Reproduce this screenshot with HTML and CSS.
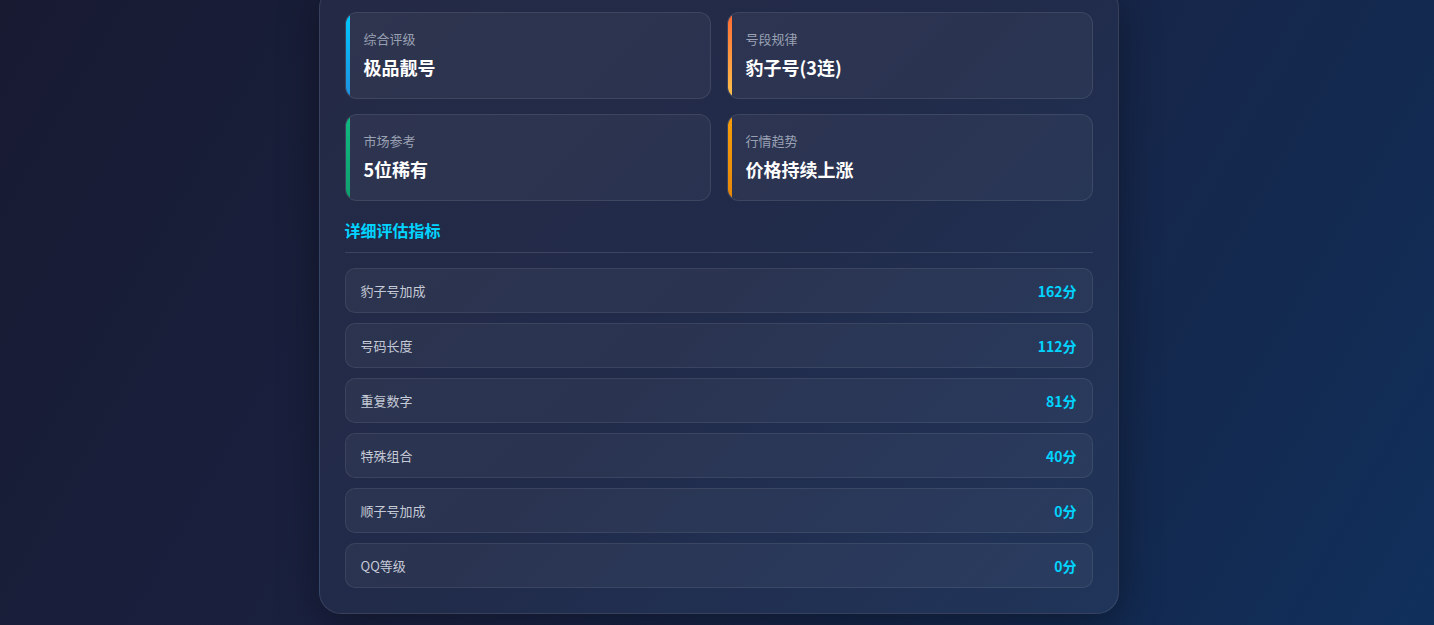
FILE: index.html
```html
<!DOCTYPE html>
<html lang="zh-CN">
<head>
<meta charset="utf-8">
<title>号码评估</title>
<link rel="stylesheet" href="styles.css">
</head>
<body>
<div class="page">
  <div class="panel">
    <div class="info-grid">
      <div class="info-card accent-blue">
        <div class="info-label">综合评级</div>
        <div class="info-value">极品靓号</div>
      </div>
      <div class="info-card accent-orange">
        <div class="info-label">号段规律</div>
        <div class="info-value">豹子号(3连)</div>
      </div>
      <div class="info-card accent-green">
        <div class="info-label">市场参考</div>
        <div class="info-value">5位稀有</div>
      </div>
      <div class="info-card accent-amber">
        <div class="info-label">行情趋势</div>
        <div class="info-value">价格持续上涨</div>
      </div>
    </div>
    <h3 class="section-title">详细评估指标</h3>
    <div class="metric-list">
      <div class="metric-row"><span class="metric-name">豹子号加成</span><span class="metric-score">162分</span></div>
      <div class="metric-row"><span class="metric-name">号码长度</span><span class="metric-score">112分</span></div>
      <div class="metric-row"><span class="metric-name">重复数字</span><span class="metric-score">81分</span></div>
      <div class="metric-row"><span class="metric-name">特殊组合</span><span class="metric-score">40分</span></div>
      <div class="metric-row"><span class="metric-name">顺子号加成</span><span class="metric-score">0分</span></div>
      <div class="metric-row"><span class="metric-name">QQ等级</span><span class="metric-score">0分</span></div>
    </div>
  </div>
</div>
</body>
</html>
```
FILE: styles.css
```css
* { box-sizing: border-box; }
html, body { margin: 0; padding: 0; height: 100%; }
body {
  font-family: "Noto Sans CJK SC", "Noto Sans", "Liberation Sans", sans-serif;
  background: linear-gradient(120deg, #171a31 0%, #1a2242 45%, #13294f 80%, #10305c 100%);
  color: #fff;
  overflow: hidden;
}
.page {
  display: flex;
  justify-content: center;
  padding-left: 3px;
}
.panel {
  width: 800px;
  margin-top: -14px;
  padding: 25px;
  border: 1px solid rgba(255, 255, 255, 0.1);
  border-radius: 22px;
  background: linear-gradient(135deg, #242a45 0%, #212b4a 50%, #20355a 100%);
  box-shadow: 0 10px 40px rgba(0, 0, 0, 0.35);
}
.info-grid {
  display: grid;
  grid-template-columns: 1fr 1fr;
  column-gap: 16px;
  row-gap: 15px;
}
.info-card {
  position: relative;
  height: 87px;
  padding: 16px 18px;
  border: 1px solid rgba(255, 255, 255, 0.09);
  border-radius: 12px;
  background: linear-gradient(135deg, rgba(255,255,255,0.05), rgba(255,255,255,0.04));
  overflow: hidden;
}
.info-card::before {
  content: "";
  position: absolute;
  left: 0; top: 0; bottom: 0;
  width: 4px;
}
.accent-blue::before { background: linear-gradient(180deg, #00c8ff, #1e90e0); }
.accent-orange::before { background: linear-gradient(180deg, #ff6b35, #ffc24a); }
.accent-green::before { background: linear-gradient(180deg, #10b981, #0e9f6e); }
.accent-amber::before { background: linear-gradient(180deg, #f59e0b, #e8870a); }
.info-label {
  font-size: 13px;
  line-height: 20px;
  color: #9aa1b3;
}
.info-value {
  margin-top: 5px;
  font-size: 18px;
  line-height: 26px;
  font-weight: 700;
  color: #ffffff;
}
.section-title {
  margin: 18px 0 15px;
  padding-bottom: 11px;
  font-size: 16px;
  line-height: 22px;
  font-weight: 700;
  color: #00d4ff;
  border-bottom: 1px solid rgba(255, 255, 255, 0.12);
}
.metric-list {
  display: flex;
  flex-direction: column;
  gap: 10px;
}
.metric-row {
  display: flex;
  justify-content: space-between;
  align-items: center;
  height: 45px;
  padding: 0 15px;
  border: 1px solid rgba(255, 255, 255, 0.08);
  border-radius: 10px;
  background: rgba(255, 255, 255, 0.045);
}
.metric-name {
  font-size: 13px;
  color: #c5cad6;
}
.metric-score {
  font-size: 14px;
  font-weight: 700;
  color: #00d4ff;
}
```
